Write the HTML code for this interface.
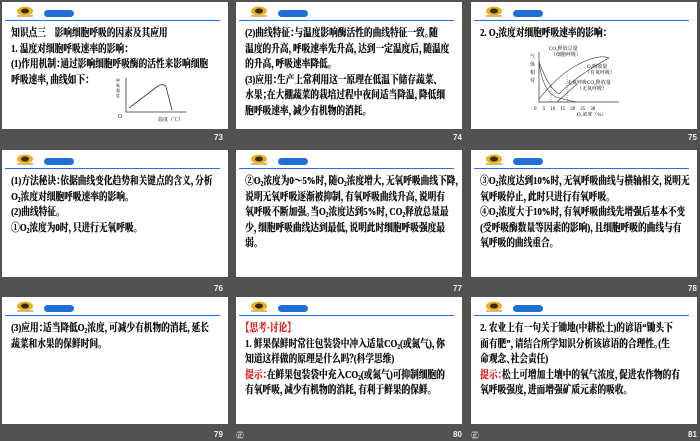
<!DOCTYPE html><html><head><meta charset="utf-8"><style>
*{margin:0;padding:0;box-sizing:border-box}
body{width:700px;height:438px;background:#525252;position:relative;overflow:hidden;font-family:"Liberation Serif","Noto Serif CJK SC","Noto Sans CJK SC",serif}
.s{position:absolute;width:226px;height:127px;background:#fff;overflow:hidden}
.n{position:absolute;color:#eee;font:bold 8px "Liberation Sans",sans-serif}
.logo{position:absolute;left:12px;top:4px;width:22px;height:12px}
.pill{position:absolute;left:42px;top:8px;width:30px;height:7px;border-radius:4px;background:#1f6fd6}
.ln{position:absolute;left:3px;right:8px;top:18px;height:1px;background:#2a6fdc}
.t{position:absolute;left:9px;top:24px;width:280px;transform:scaleX(.79);transform-origin:0 0;font-size:11px;line-height:15.6px;font-weight:bold;color:#111;white-space:nowrap;text-shadow:.35px 0 #111;font-feature-settings:"halt"}
.r{color:#e0201a;text-shadow:.35px 0 #e0201a}
sub{font-size:7px;vertical-align:-2px;line-height:0}
</style></head><body>

<svg width="0" height="0" style="position:absolute"><defs><g id="lg"><ellipse cx="11" cy="5" rx="8" ry="4.5" fill="#e8b01a"/><ellipse cx="11" cy="5" rx="4" ry="2.5" fill="#3a2a10"/><rect x="3" y="9" width="16" height="2" fill="#d8b878"/></g></defs></svg>

<!-- 73 -->
<div class="s" style="left:2px;top:2px">
<svg class="logo"><use href="#lg"/></svg><div class="pill"></div><div class="ln"></div>
<div class="t">知识点三　影响细胞呼吸的因素及其应用<br>1. 温度对细胞呼吸速率的影响：<br>(1)作用机制：通过影响细胞呼吸酶的活性来影响细胞<br>呼吸速率，曲线如下：</div>
<svg style="position:absolute;left:112px;top:74px" width="80" height="50" font-family="Liberation Serif,Noto Serif CJK SC,serif"><path d="M12 2V36H72" fill="none" stroke="#333" stroke-width=".8"/><path d="M15 32L44 10Q50 7 52 11L58 34" fill="none" stroke="#333" stroke-width=".8"/><text x="4" y="42" font-size="6" font-style="italic">O</text><text x="44" y="45" font-size="5">温度（℃）</text><text x="2" y="6" font-size="4">呼</text><text x="2" y="11" font-size="4">吸</text><text x="2" y="16" font-size="4">强</text><text x="2" y="21" font-size="4">度</text></svg>
</div>
<div class="n" style="left:214px;top:133px">73</div>

<!-- 74 -->
<div class="s" style="left:236px;top:2px">
<svg class="logo"><use href="#lg"/></svg><div class="pill"></div><div class="ln"></div>
<div class="t">(2)曲线特征：与温度影响酶活性的曲线特征一致。随<br>温度的升高，呼吸速率先升高，达到一定温度后，随温度<br>的升高，呼吸速率降低。<br>(3)应用：生产上常利用这一原理在低温下储存蔬菜、<br>水果；在大棚蔬菜的栽培过程中夜间适当降温，降低细<br>胞呼吸速率，减少有机物的消耗。</div>
</div>
<div class="n" style="left:453px;top:133px">74</div>

<!-- 75 -->
<div class="s" style="left:471px;top:2px">
<svg class="logo"><use href="#lg"/></svg><div class="pill"></div><div class="ln"></div>
<div class="t">2. O<sub>2</sub>浓度对细胞呼吸速率的影响：</div>
<svg style="position:absolute;left:58px;top:42px" width="100" height="72" font-size="5" font-family="Liberation Serif,Noto Serif CJK SC,serif">
<path d="M10 8V58H90" fill="none" stroke="#333" stroke-width=".7"/>
<path d="M10 18Q14 50 30 54T48 58M10 55Q30 30 50 20T80 14M10 18Q20 45 30 50Q50 30 80 14M28 58L48 40" fill="none" stroke="#333" stroke-width=".6"/>
<path d="M22 58V40M38 58V30" stroke="#333" stroke-width=".5" stroke-dasharray="1 1"/>
<text x="5" y="66">0 　5　10　15　20　25　30</text><text x="48" y="72">O₂浓度（%）</text>
<text x="20" y="6">CO₂释放总量</text><text x="22" y="12">（细胞呼吸）</text>
<text x="58" y="24">O₂吸收量</text><text x="56" y="30">（有氧呼吸）</text>
<text x="38" y="40">无氧呼吸CO₂释放量</text><text x="48" y="46">（无氧呼吸）</text>
<text x="1" y="14">气</text><text x="1" y="22">体</text><text x="1" y="30">相</text><text x="1" y="38">对</text></svg>
</div>
<div class="n" style="left:688px;top:133px">75</div>

<!-- 76 -->
<div class="s" style="left:2px;top:150px">
<svg class="logo"><use href="#lg"/></svg><div class="pill"></div><div class="ln"></div>
<div class="t">(1)方法秘诀：依据曲线变化趋势和关键点的含义，分析<br>O<sub>2</sub>浓度对细胞呼吸速率的影响。<br>(2)曲线特征。<br>①O<sub>2</sub>浓度为0时，只进行无氧呼吸。</div>
</div>
<div class="n" style="left:214px;top:284px">76</div>

<!-- 77 -->
<div class="s" style="left:236px;top:150px">
<svg class="logo"><use href="#lg"/></svg><div class="pill"></div><div class="ln"></div>
<div class="t">②O<sub>2</sub>浓度为0～5%时，随O<sub>2</sub>浓度增大，无氧呼吸曲线下降，<br>说明无氧呼吸逐渐被抑制，有氧呼吸曲线升高，说明有<br>氧呼吸不断加强。当O<sub>2</sub>浓度达到5%时，CO<sub>2</sub>释放总量最<br>少，细胞呼吸曲线达到最低，说明此时细胞呼吸强度最<br>弱。</div>
</div>
<div class="n" style="left:453px;top:284px">77</div>

<!-- 78 -->
<div class="s" style="left:471px;top:150px">
<svg class="logo"><use href="#lg"/></svg><div class="pill"></div><div class="ln"></div>
<div class="t">③O<sub>2</sub>浓度达到10%时，无氧呼吸曲线与横轴相交，说明无<br>氧呼吸停止，此时只进行有氧呼吸。<br>④O<sub>2</sub>浓度大于10%时，有氧呼吸曲线先增强后基本不变<br>(受呼吸酶数量等因素的影响)，且细胞呼吸的曲线与有<br>氧呼吸的曲线重合。</div>
</div>
<div class="n" style="left:688px;top:284px">78</div>

<!-- 79 -->
<div class="s" style="left:2px;top:297px">
<svg class="logo"><use href="#lg"/></svg><div class="pill"></div><div class="ln"></div>
<div class="t">(3)应用：适当降低O<sub>2</sub>浓度，可减少有机物的消耗，延长<br>蔬菜和水果的保鲜时间。</div>
</div>
<div class="n" style="left:214px;top:430px">79</div>

<!-- 80 -->
<div class="s" style="left:236px;top:297px">
<svg class="logo"><use href="#lg"/></svg><div class="pill"></div><div class="ln"></div>
<div class="t"><span class="r">【思考·讨论】</span><br>1. 鲜果保鲜时常往包装袋中冲入适量CO<sub>2</sub>(或氮气)，你<br>知道这样做的原理是什么吗？(科学思维)<br><span class="r">提示：</span>在鲜果包装袋中充入CO<sub>2</sub>(或氮气)可抑制细胞的<br>有氧呼吸，减少有机物的消耗，有利于鲜果的保鲜。</div>
</div>
<div class="n" style="left:236px;top:430px;font-weight:normal">㊣</div>
<div class="n" style="left:453px;top:430px">80</div>

<!-- 81 -->
<div class="s" style="left:471px;top:297px">
<svg class="logo"><use href="#lg"/></svg><div class="pill"></div><div class="ln"></div>
<div class="t">2. 农业上有一句关于锄地(中耕松土)的谚语“锄头下<br>面有肥”，请结合所学知识分析该谚语的合理性。(生<br>命观念、社会责任)<br><span class="r">提示：</span>松土可增加土壤中的氧气浓度，促进农作物的有<br>氧呼吸强度，进而增强矿质元素的吸收。</div>
</div>
<div class="n" style="left:471px;top:430px;font-weight:normal">㊣</div>
<div class="n" style="left:688px;top:430px">81</div>
</body></html>
